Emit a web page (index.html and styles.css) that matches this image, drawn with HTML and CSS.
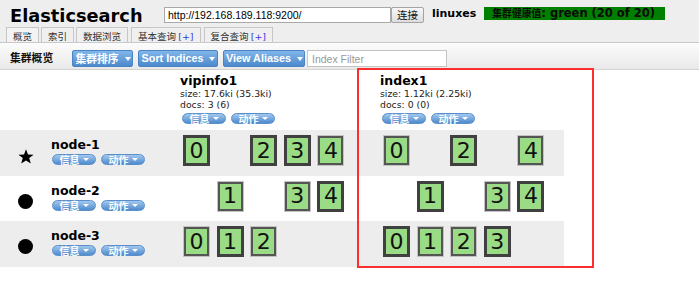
FILE: index.html
```html
<!DOCTYPE html>
<html>
<head>
<meta charset="utf-8">
<title>Elasticsearch</title>
<link rel="stylesheet" href="styles.css">
</head>
<body>
<div class="header">
  <div class="topbar">
    <h1 class="logo">Elasticsearch</h1>
    <input class="url" type="text" value="http://192.168.189.118:9200/">
    <button class="connect">连接</button>
    <span class="cluster-name">linuxes</span>
    <span class="health"><span class="zh">集群健康值</span>: green (20 of 20)</span>
  </div>
  <div class="tabs">
    <div class="tab tab-active">概览</div>
    <div class="tab">索引</div>
    <div class="tab">数据浏览</div>
    <div class="tab tab-wide">基本查询 <span class="plus">[+]</span></div>
    <div class="tab tab-wide">复合查询 <span class="plus">[+]</span></div>
  </div>
</div>

<div class="toolbar">
  <span class="tb-title">集群概览</span>
  <button class="btn btn-sort-cluster">集群排序<span class="caret"></span></button>
  <button class="btn btn-sort-indices">Sort Indices<span class="caret"></span></button>
  <button class="btn btn-aliases">View Aliases<span class="caret"></span></button>
  <input class="filter" type="text" placeholder="Index Filter">
</div>

<div class="overview">
  <div class="ov-row ov-head">
    <div class="node-cell"></div>
    <div class="idx-cell">
      <div class="idx-name">vipinfo1</div>
      <div class="idx-meta">size: 17.6ki (35.3ki)</div>
      <div class="idx-meta">docs: 3 (6)</div>
      <div class="pills pills-idx"><span class="pill">信息<span class="pcaret"></span></span><span class="pill">动作<span class="pcaret"></span></span></div>
    </div>
    <div class="idx-cell">
      <div class="idx-name">index1</div>
      <div class="idx-meta">size: 1.12ki (2.25ki)</div>
      <div class="idx-meta">docs: 0 (0)</div>
      <div class="pills pills-idx"><span class="pill">信息<span class="pcaret"></span></span><span class="pill">动作<span class="pcaret"></span></span></div>
    </div>
  </div>

  <div class="ov-row ov-node alt">
    <div class="node-cell">
      <div class="node-icon"><svg class="star" width="16" height="15" viewBox="0 0 16 15"><polygon points="8,0.3 10,5.6 15.6,5.7 11.2,9.1 12.8,14.6 8,11.4 3.2,14.6 4.8,9.1 0.4,5.7 6,5.6" fill="#000"/></svg></div>
      <div class="node-info">
        <div class="node-name">node-1</div>
        <div class="pills pills-node"><span class="pill">信息<span class="pcaret"></span></span><span class="pill">动作<span class="pcaret"></span></span></div>
      </div>
    </div>
    <div class="shards">
      <div class="shard primary">0</div>
      <div class="shard empty"></div>
      <div class="shard primary">2</div>
      <div class="shard primary">3</div>
      <div class="shard replica">4</div>
    </div>
    <div class="shards">
      <div class="shard replica">0</div>
      <div class="shard empty"></div>
      <div class="shard primary">2</div>
      <div class="shard empty"></div>
      <div class="shard replica">4</div>
    </div>
  </div>

  <div class="ov-row ov-node">
    <div class="node-cell">
      <div class="node-icon"><span class="dot"></span></div>
      <div class="node-info">
        <div class="node-name">node-2</div>
        <div class="pills pills-node"><span class="pill">信息<span class="pcaret"></span></span><span class="pill">动作<span class="pcaret"></span></span></div>
      </div>
    </div>
    <div class="shards">
      <div class="shard empty"></div>
      <div class="shard replica">1</div>
      <div class="shard empty"></div>
      <div class="shard replica">3</div>
      <div class="shard primary">4</div>
    </div>
    <div class="shards">
      <div class="shard empty"></div>
      <div class="shard primary">1</div>
      <div class="shard empty"></div>
      <div class="shard replica">3</div>
      <div class="shard primary">4</div>
    </div>
  </div>

  <div class="ov-row ov-node alt">
    <div class="node-cell">
      <div class="node-icon"><span class="dot"></span></div>
      <div class="node-info">
        <div class="node-name">node-3</div>
        <div class="pills pills-node"><span class="pill">信息<span class="pcaret"></span></span><span class="pill">动作<span class="pcaret"></span></span></div>
      </div>
    </div>
    <div class="shards">
      <div class="shard replica">0</div>
      <div class="shard primary">1</div>
      <div class="shard replica">2</div>
      <div class="shard empty"></div>
      <div class="shard empty"></div>
    </div>
    <div class="shards">
      <div class="shard primary">0</div>
      <div class="shard replica">1</div>
      <div class="shard replica">2</div>
      <div class="shard primary">3</div>
      <div class="shard empty"></div>
    </div>
  </div>
</div>

<div class="highlight"></div>
</body>
</html>
```

FILE: styles.css
```css
* { box-sizing: border-box; }
html, body { margin: 0; padding: 0; background: #fff; }
body {
  position: relative;
  width: 699px;
  height: 288px;
  overflow: hidden;
  font-family: "DejaVu Sans", "Noto Sans CJK SC", sans-serif;
  color: #000;
}

/* ---------- header ---------- */
.header {
  background: #eeeeee;
  height: 43px;
  border-bottom: 1px solid #c9c9c9;
}
.topbar {
  display: flex;
  align-items: flex-start;
  height: 27px;
  padding: 6px 0 0 10px;
}
.logo {
  margin: 0;
  flex: 0 0 154px;
  font: bold 17.8px/20px "DejaVu Sans", sans-serif;
  color: #000;
}
.url {
  margin: 1px 0 0 0;
  width: 227px;
  height: 16px;
  padding: 0 3px;
  border: 1px solid #a9a9a9;
  background: #fff;
  font: 10.5px "Liberation Sans", sans-serif;
  color: #000;
  outline: none;
}
.connect {
  margin: 1px 0 0 0;
  width: 33px;
  height: 16px;
  padding: 0;
  border: 1px solid #a3a3a3;
  border-radius: 2px;
  background: linear-gradient(#f7f7f7, #dedede);
  font: 10.5px/14px "Noto Sans CJK SC", sans-serif;
  color: #111;
}
.cluster-name {
  margin: 0 0 0 8px;
  font: bold 11px/16px "DejaVu Sans", sans-serif;
}
.health {
  margin: 1px 0 0 8px;
  width: 181px;
  height: 13px;
  padding-left: 8px;
  background: #008000;
  color: #0a0a0a;
  font: bold 11.5px/13px "DejaVu Sans", "Noto Sans CJK SC", sans-serif;
  white-space: nowrap;
  overflow: hidden;
}
.health .zh {
  font-family: "Noto Sans CJK SC", sans-serif;
  font-size: 9.8px;
}

/* tabs */
.tabs {
  display: flex;
  align-items: flex-end;
  height: 15px;
  padding-left: 6px;
  gap: 2px;
}
.tab {
  height: 15px;
  padding: 3px 6px 0;
  border: 1px solid #c6c6c6;
  border-bottom: none;
  background: #efefef;
  font: 9.5px/11px "Noto Sans CJK SC", sans-serif;
  color: #333;
  white-space: nowrap;
}
.tab-active { background: #f3f3f3; }
.tab-wide { margin-left: 1px; }
.plus {
  font-family: "DejaVu Sans", sans-serif;
  font-size: 9.5px;
  color: #3535e0;
}

/* ---------- toolbar ---------- */
.toolbar {
  display: flex;
  align-items: flex-start;
  height: 27px;
  padding: 7px 0 0 10px;
  background: linear-gradient(#fcfcfc, #e9e9e9);
  border-bottom: 1px solid #d4d4d4;
}
.tb-title {
  flex: 0 0 62px;
  font: bold 10.8px/15px "Noto Sans CJK SC", sans-serif;
  color: #111;
}
.btn {
  display: flex;
  align-items: center;
  justify-content: center;
  gap: 6px;
  height: 17px;
  margin: 0 5px 0 0;
  padding: 0 0 0 1px;
  border: 1px solid #4b84c4;
  border-radius: 2px;
  background: linear-gradient(#82b6ea, #4c89cc);
  color: #fff;
  font: bold 10.8px/15px "Liberation Sans", "Noto Sans CJK SC", sans-serif;
}
.btn-sort-cluster { width: 61px; font-family: "Noto Sans CJK SC", sans-serif; font-size: 10.8px; }
.btn-sort-indices { width: 80px; }
.btn-aliases { width: 82px; margin-right: 2px; }
.caret {
  width: 0;
  height: 0;
  border-left: 3.5px solid transparent;
  border-right: 3.5px solid transparent;
  border-top: 4px solid #fff;
}
.filter {
  margin: 0;
  width: 140px;
  height: 17px;
  padding: 0 4px;
  border: 1px solid #c4c4c4;
  background: #fff;
  font: 10.5px "Liberation Sans", sans-serif;
  outline: none;
}
.filter::placeholder { color: #999; }

/* ---------- overview ---------- */
.ov-row {
  display: grid;
  grid-template-columns: 178px 200px 186px;
  width: 564px;
}
.ov-head { height: 60px; }
.ov-node { height: 45.5px; }
.ov-node.alt { background: #ededed; }

.idx-cell { padding: 4px 0 0 2px; }
.idx-name { font: bold 12.5px/14px "DejaVu Sans", sans-serif; }
.idx-meta { font: 9.3px/11px "DejaVu Sans", sans-serif; color: #222; }

.pills { display: flex; gap: 5px; }
.pills-idx { margin: 3px 0 0 2px; }
.pills-node { margin: 2px 0 0 1px; }
.pill {
  display: flex;
  align-items: center;
  justify-content: center;
  gap: 3px;
  width: 44px;
  height: 11px;
  border: 1px solid #5a8fca;
  border-radius: 6px;
  background: linear-gradient(#a2c8ef, #4f8bcd);
  color: #fff;
  font: bold 10px/9px "Noto Sans CJK SC", sans-serif;
}
.pcaret {
  width: 0;
  height: 0;
  border-left: 3px solid transparent;
  border-right: 3px solid transparent;
  border-top: 3.5px solid #fff;
}

.node-cell { display: flex; }
.node-icon {
  flex: 0 0 51px;
  display: flex;
  justify-content: center;
  padding-top: 18px;
}
.star { display: block; margin-top: 1px; }
.dot {
  display: block;
  width: 15px;
  height: 15px;
  border-radius: 50%;
  background: #000;
}
.node-info { padding-top: 8px; }
.node-name { font: bold 12.5px/14px "DejaVu Sans", sans-serif; }

.shards {
  display: flex;
  gap: 6.6px;
  padding: 5px 0 0 5px;
}
.shard {
  display: flex;
  align-items: center;
  justify-content: center;
  width: 27px;
  height: 31px;
  background: #9adc85;
  font: 22px/1 "DejaVu Sans", sans-serif;
  color: #111;
}
.shard.primary { border: 3px solid #404040; }
.shard.replica { border: 1px solid #c3c3c3; box-shadow: inset 0 0 0 2px #555; }
.shard.empty { visibility: hidden; }

/* annotation rectangle drawn over the screenshot content */
.highlight {
  position: absolute;
  left: 357px;
  top: 68px;
  width: 237px;
  height: 200px;
  border: 2px solid #ff2d2d;
  pointer-events: none;
}
```
